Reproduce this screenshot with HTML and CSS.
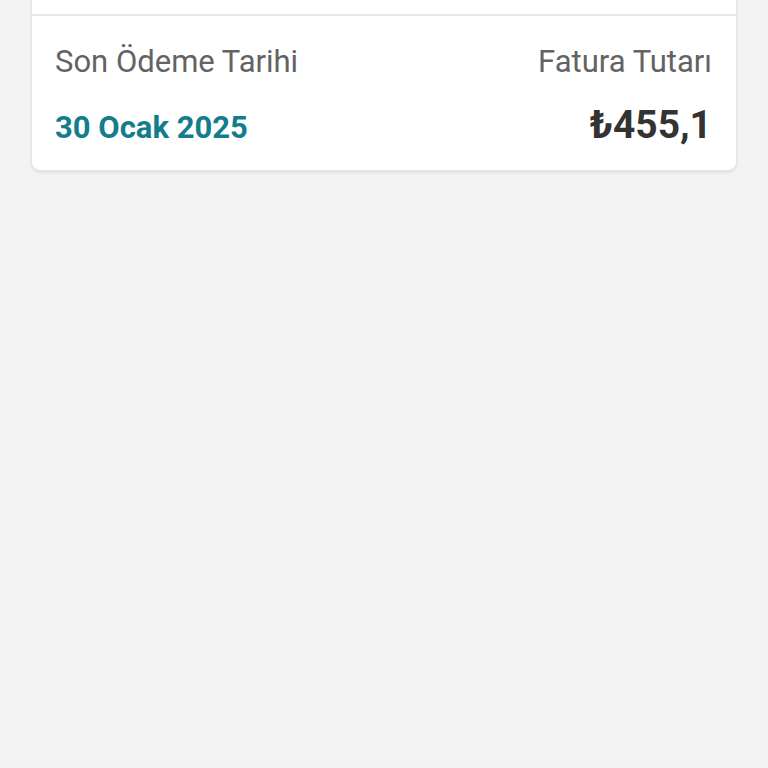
FILE: index.html
```html
<!DOCTYPE html>
<html lang="tr">

<head>
    <meta charset="UTF-8">
    <meta name="viewport" content="width=device-width, initial-scale=1.0">
    <title>Fatura</title>
    <link rel="stylesheet" href="styles.css">
</head>

<body>
    <div class="page">
        <div class="card">
            <div class="card-top"></div>
            <div class="card-body">
                <span class="label">Son Ödeme Tarihi</span>
                <span class="label right">Fatura Tutarı</span>
                <span class="date">30 Ocak 2025</span>
                <span class="amount right">₺455,1</span>
            </div>
        </div>
    </div>
</body>

</html>
```

FILE: styles.css
```css
html,
body {
    margin: 0;
    height: 100%;
    background-color: #f3f3f3;
    font-family: Roboto, "Noto Sans", sans-serif;
}

.page {
    padding: 0 31px;
}

.card {
    background-color: #fff;
    border: 1px solid #e4e4e4;
    border-top: none;
    border-radius: 0 0 9px 9px;
    box-shadow: 0 2px 3px rgba(0, 0, 0, 0.08);
}

.card-top {
    height: 14px;
    border-bottom: 2px solid #e8e8e8;
}

.card-body {
    display: grid;
    grid-template-columns: 1fr auto;
    align-items: baseline;
    row-gap: 25px;
    padding: 28px 24px 22px 23px;
}

.right {
    justify-self: end;
}

.label {
    font-size: 31px;
    line-height: 36px;
    color: #636363;
}

.date {
    font-size: 31px;
    line-height: 40px;
    font-weight: bold;
    color: #137d8b;
}

.amount {
    font-size: 39px;
    line-height: 40px;
    font-weight: bold;
    color: #333;
}
```
